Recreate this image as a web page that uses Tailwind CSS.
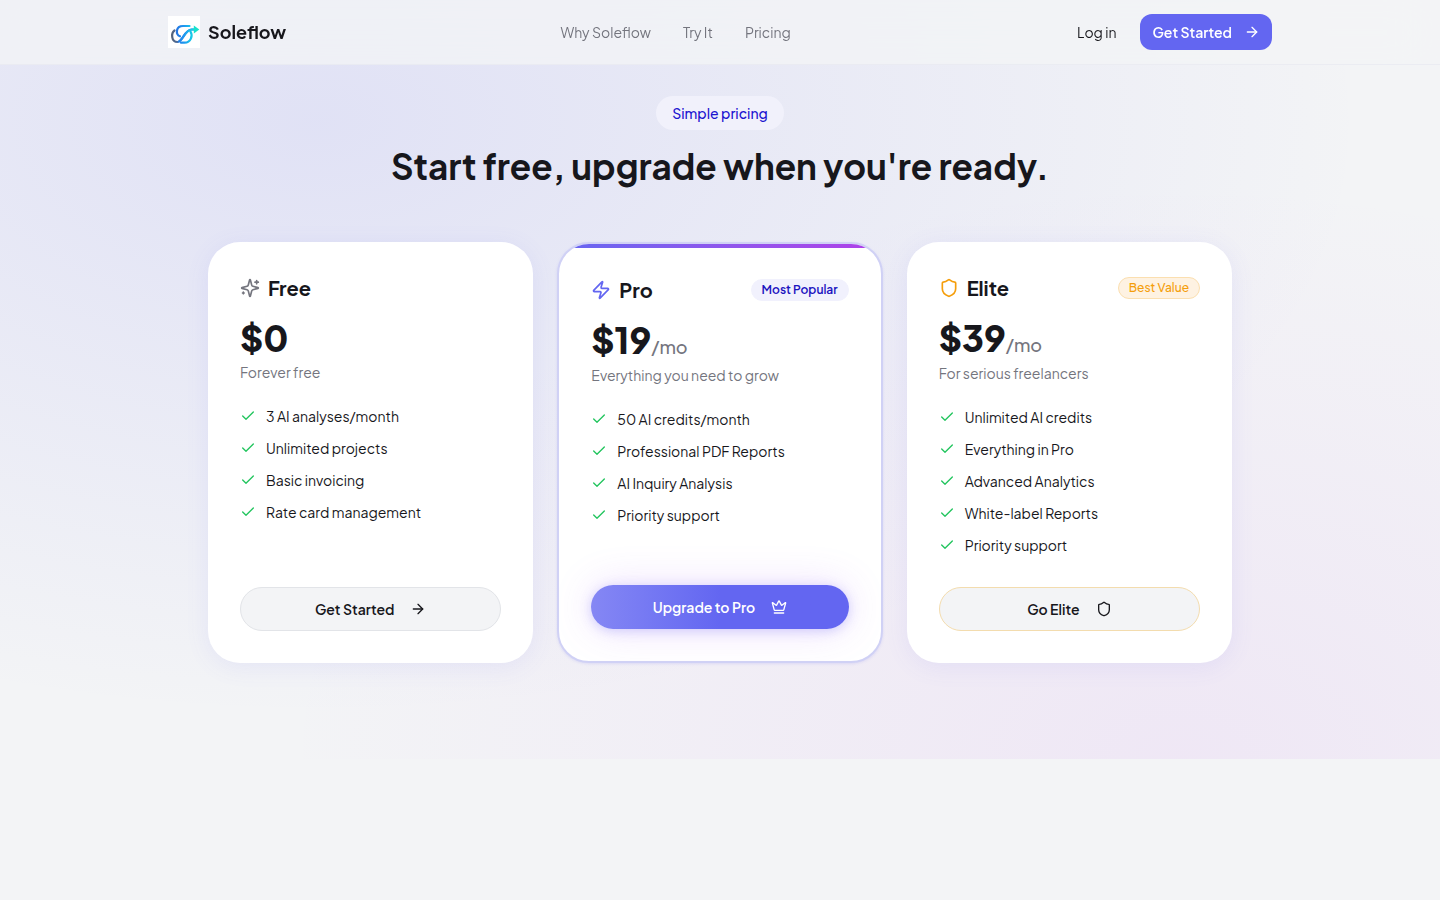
<!DOCTYPE html>
<html lang="en">
<head>
<meta charset="utf-8"/>
<meta name="viewport" content="width=device-width, initial-scale=1"/>
<title>Soleflow - Pricing</title>
<script src="https://cdn.jsdelivr.net/npm/@tailwindcss/browser@4"></script>
</head>
<body class="min-h-screen bg-[#f3f4f6] font-['Plus_Jakarta_Sans',Inter,sans-serif] text-[#17171c] antialiased">

<!-- Icons shared by the cards -->
<svg class="hidden" xmlns="http://www.w3.org/2000/svg">
  <symbol id="check" viewBox="0 0 24 24"><path d="M20 6 9 17l-5-5"/></symbol>
  <symbol id="arrow" viewBox="0 0 24 24"><path d="M5 12h14"/><path d="m12 5 7 7-7 7"/></symbol>
  <symbol id="shield" viewBox="0 0 24 24"><path d="M20 13c0 5-3.500 7.500-7.660 8.950a1 1 0 0 1-.67-.01C7.500 20.500 4 18 4 13V6a1 1 0 0 1 1-1c2 0 4.500-1.200 6.240-2.720a1.170 1.170 0 0 1 1.520 0C14.510 3.810 17 5 19 5a1 1 0 0 1 1 1z"/></symbol>
</svg>

<header class="sticky top-0 z-10 border-b border-[#e4e6ee]/60 bg-[#f3f4f6]/75 backdrop-blur-xl">
  <div class="mx-auto flex h-16 max-w-6xl items-center justify-between px-6">
    <a href="#" class="flex items-center gap-2">
      <svg class="size-8 bg-white" viewBox="0 0 32 32" fill="none" stroke-width="2.200" stroke-linecap="round">
        <defs>
          <linearGradient id="flow" x1="8" y1="0" x2="30" y2="0" gradientUnits="userSpaceOnUse">
            <stop stop-color="#2472e0"/><stop offset=".35" stop-color="#1e96f0"/><stop offset=".7" stop-color="#18c8e8"/><stop offset="1" stop-color="#14e6c8"/>
          </linearGradient>
          <linearGradient id="tail" x1="4" y1="0" x2="14" y2="0" gradientUnits="userSpaceOnUse">
            <stop stop-color="#55637a"/><stop offset=".5" stop-color="#4a6a9a"/><stop offset="1" stop-color="#2478e4"/>
          </linearGradient>
        </defs>
        <path d="M6.500 14.500c-3.500 2.500-3.500 11.500 3 11.500 5 0 7-12.500 14-12.500h3" stroke="url(#tail)"/>
        <path d="M21.500 10H15c-7.500 0-7.500 8.500-3 10.300" stroke="url(#flow)"/>
        <path d="M11 25.500c4.500-2 6.500-12 13-12h3" stroke="url(#flow)"/>
        <path d="M22.500 15.500c2.500 4 .5 11.200-6 11.200H13" stroke="url(#flow)"/>
        <path d="m25.800 9.500 5.500 3.900-5.500 4z" fill="#16e2cc"/>
      </svg>
      <span class="text-lg font-bold leading-7">Soleflow</span>
    </a>
    <nav class="hidden gap-8 pr-3 text-sm text-[#74757e] md:flex">
      <a href="#why">Why Soleflow</a>
      <a href="#try">Try It</a>
      <a href="#pricing">Pricing</a>
    </nav>
    <div class="flex items-center gap-6 whitespace-nowrap text-sm">
      <a href="#login">Log in</a>
      <button class="flex h-9 items-center gap-3 rounded-xl bg-[#6366f1] px-3 font-semibold text-white">
        Get Started
        <svg class="size-4 fill-none stroke-current stroke-2" stroke-linecap="round" stroke-linejoin="round"><use href="#arrow"/></svg>
      </button>
    </div>
  </div>
</header>

<main id="pricing" class="-mt-[65px] bg-[radial-gradient(ellipse_at_22%_16%,rgba(99,102,241,0.13),transparent_66%),radial-gradient(ellipse_at_82%_100%,rgba(190,80,235,0.08),transparent_54%)] px-6 py-24">
  <div class="mx-auto max-w-5xl">
    <div class="flex flex-col items-center text-center">
      <span class="rounded-full bg-[#f1f1fb] px-4 py-[7px] text-sm font-medium text-[#1c14d0]">Simple pricing</span>
      <h1 class="mt-3 text-[35px] font-bold leading-12">Start free, upgrade when you're ready.</h1>
    </div>

    <div class="mt-[52px] grid gap-6 md:grid-cols-3">
      <section class="flex flex-col rounded-[32px] bg-white p-8 shadow-[0_4px_24px_rgba(99,102,241,0.09)]">
        <div class="flex items-center gap-2">
          <svg class="size-5 fill-none stroke-[#74757e] stroke-2" viewBox="0 0 24 24" stroke-linecap="round" stroke-linejoin="round">
            <path d="M9.937 15.500A2 2 0 0 0 8.500 14.063l-6.135-1.582a.5.5 0 0 1 0-.962L8.500 9.936A2 2 0 0 0 9.937 8.500l1.582-6.135a.5.5 0 0 1 .963 0L14.063 8.500A2 2 0 0 0 15.500 9.937l6.135 1.581a.5.5 0 0 1 0 .964L15.500 14.063a2 2 0 0 0-1.437 1.437l-1.582 6.135a.5.5 0 0 1-.963 0z"/>
            <path d="M20 3v4M22 5h-4M4 17v2M5 18H3"/>
          </svg>
          <h2 class="text-xl font-bold leading-7">Free</h2>
        </div>
        <p class="mt-4 text-4xl font-extrabold leading-10">$0</p>
        <p class="mt-1 text-sm text-[#74757e]">Forever free</p>
        <ul class="mt-6 mb-8 flex flex-1 flex-col gap-3 text-sm">
          <li class="flex items-center gap-[10px]"><svg class="size-4 fill-none stroke-[#22c55e] stroke-2" stroke-linecap="round" stroke-linejoin="round"><use href="#check"/></svg>3 AI analyses/month</li>
          <li class="flex items-center gap-[10px]"><svg class="size-4 fill-none stroke-[#22c55e] stroke-2" stroke-linecap="round" stroke-linejoin="round"><use href="#check"/></svg>Unlimited projects</li>
          <li class="flex items-center gap-[10px]"><svg class="size-4 fill-none stroke-[#22c55e] stroke-2" stroke-linecap="round" stroke-linejoin="round"><use href="#check"/></svg>Basic invoicing</li>
          <li class="flex items-center gap-[10px]"><svg class="size-4 fill-none stroke-[#22c55e] stroke-2" stroke-linecap="round" stroke-linejoin="round"><use href="#check"/></svg>Rate card management</li>
        </ul>
        <button class="flex h-11 items-center justify-center gap-4 rounded-full border border-[#e2e4e8] bg-[#f3f4f6] text-sm font-semibold">
          Get Started
          <svg class="size-4 fill-none stroke-current stroke-2" stroke-linecap="round" stroke-linejoin="round"><use href="#arrow"/></svg>
        </button>
      </section>

      <section class="relative flex flex-col overflow-hidden rounded-[32px] border-2 border-[#d0d1f5] bg-white p-8 shadow-[0_1px_3px_rgba(99,102,241,0.15)]">
        <div class="absolute inset-x-0 top-0 h-1 bg-linear-to-r from-[#6366f1] to-[#b03fe8]"></div>
        <div class="flex items-center justify-between">
          <div class="flex items-center gap-2">
            <svg class="size-5 fill-none stroke-[#6366f1] stroke-2" viewBox="0 0 24 24" stroke-linecap="round" stroke-linejoin="round"><path d="M4 14a1 1 0 0 1-.78-1.630l9.900-10.200a.5.5 0 0 1 .86.460l-1.920 6.020A1 1 0 0 0 13 10h7a1 1 0 0 1 .78 1.630l-9.900 10.200a.5.5 0 0 1-.86-.46l1.920-6.020A1 1 0 0 0 11 14z"/></svg>
            <h2 class="text-xl font-bold leading-7">Pro</h2>
          </div>
          <span class="rounded-full border border-[#f1f1fd] bg-[#f1f1fd] px-[10px] py-[2px] text-xs font-semibold text-[#1c14c0]">Most Popular</span>
        </div>
        <p class="mt-4 text-4xl font-extrabold leading-10">$19<span class="text-lg font-medium text-[#74757e]">/mo</span></p>
        <p class="mt-1 text-sm text-[#74757e]">Everything you need to grow</p>
        <ul class="mt-6 mb-8 flex flex-1 flex-col gap-3 text-sm">
          <li class="flex items-center gap-[10px]"><svg class="size-4 fill-none stroke-[#22c55e] stroke-2" stroke-linecap="round" stroke-linejoin="round"><use href="#check"/></svg>50 AI credits/month</li>
          <li class="flex items-center gap-[10px]"><svg class="size-4 fill-none stroke-[#22c55e] stroke-2" stroke-linecap="round" stroke-linejoin="round"><use href="#check"/></svg>Professional PDF Reports</li>
          <li class="flex items-center gap-[10px]"><svg class="size-4 fill-none stroke-[#22c55e] stroke-2" stroke-linecap="round" stroke-linejoin="round"><use href="#check"/></svg>AI Inquiry Analysis</li>
          <li class="flex items-center gap-[10px]"><svg class="size-4 fill-none stroke-[#22c55e] stroke-2" stroke-linecap="round" stroke-linejoin="round"><use href="#check"/></svg>Priority support</li>
        </ul>
        <button class="flex h-11 items-center justify-center gap-4 rounded-full bg-linear-to-r from-[#8587f4] to-[#6366f1] to-50% text-sm font-semibold text-white shadow-[0_2px_12px_rgba(99,102,241,0.28),0_0_40px_rgba(168,85,247,0.18)]">
          Upgrade to Pro
          <svg class="size-4 fill-none stroke-current stroke-2" viewBox="0 0 24 24" stroke-linecap="round" stroke-linejoin="round"><path d="M11.562 3.266a.5.5 0 0 1 .876 0L15.390 8.870a1 1 0 0 0 1.516.294L21.183 5.500a.5.5 0 0 1 .798.519l-2.834 10.246a1 1 0 0 1-.956.734H5.810a1 1 0 0 1-.957-.734L2.020 6.020a.5.5 0 0 1 .798-.519l4.276 3.664a1 1 0 0 0 1.516-.294z"/><path d="M5 21h14"/></svg>
        </button>
      </section>

      <section class="flex flex-col rounded-[32px] bg-white p-8 shadow-[0_4px_24px_rgba(99,102,241,0.09)]">
        <div class="flex items-center justify-between">
          <div class="flex items-center gap-2">
            <svg class="size-5 fill-none stroke-[#f59e0b] stroke-2" stroke-linecap="round" stroke-linejoin="round"><use href="#shield"/></svg>
            <h2 class="text-xl font-bold leading-7">Elite</h2>
          </div>
          <span class="rounded-full border border-[#fbdfb0] bg-[#fef2e2] px-[10px] py-[2px] text-xs font-medium text-[#f59e0b]">Best Value</span>
        </div>
        <p class="mt-4 text-4xl font-extrabold leading-10">$39<span class="text-lg font-medium text-[#74757e]">/mo</span></p>
        <p class="mt-1 text-sm text-[#74757e]">For serious freelancers</p>
        <ul class="mt-6 mb-8 flex flex-1 flex-col gap-3 text-sm">
          <li class="flex items-center gap-[10px]"><svg class="size-4 fill-none stroke-[#22c55e] stroke-2" stroke-linecap="round" stroke-linejoin="round"><use href="#check"/></svg>Unlimited AI credits</li>
          <li class="flex items-center gap-[10px]"><svg class="size-4 fill-none stroke-[#22c55e] stroke-2" stroke-linecap="round" stroke-linejoin="round"><use href="#check"/></svg>Everything in Pro</li>
          <li class="flex items-center gap-[10px]"><svg class="size-4 fill-none stroke-[#22c55e] stroke-2" stroke-linecap="round" stroke-linejoin="round"><use href="#check"/></svg>Advanced Analytics</li>
          <li class="flex items-center gap-[10px]"><svg class="size-4 fill-none stroke-[#22c55e] stroke-2" stroke-linecap="round" stroke-linejoin="round"><use href="#check"/></svg>White-label Reports</li>
          <li class="flex items-center gap-[10px]"><svg class="size-4 fill-none stroke-[#22c55e] stroke-2" stroke-linecap="round" stroke-linejoin="round"><use href="#check"/></svg>Priority support</li>
        </ul>
        <button class="flex h-11 items-center justify-center gap-4 rounded-full border border-[#f3dcae] bg-[#f3f4f6] text-sm font-semibold">
          Go Elite
          <svg class="size-4 fill-none stroke-current stroke-2" stroke-linecap="round" stroke-linejoin="round"><use href="#shield"/></svg>
        </button>
      </section>
    </div>
  </div>
</main>

</body>
</html>
